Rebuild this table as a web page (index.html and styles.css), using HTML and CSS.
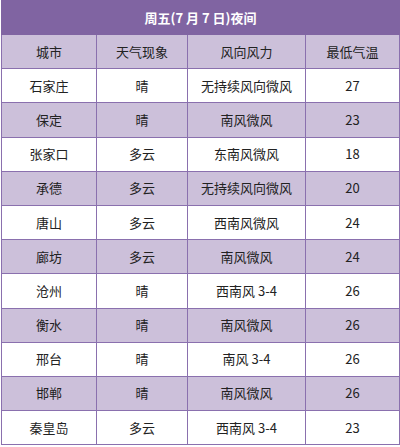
FILE: index.html
```html
<!DOCTYPE html>
<html lang="zh">
<head>
<meta charset="utf-8">
<link rel="stylesheet" href="styles.css">
</head>
<body>
<table class="weather">
  <colgroup>
    <col class="c1"><col class="c2"><col class="c3"><col class="c4">
  </colgroup>
  <thead>
    <tr class="title"><th colspan="4">周五(7 月 7 日)夜间</th></tr>
    <tr class="head"><th>城市</th><th>天气现象</th><th>风向风力</th><th>最低气温</th></tr>
  </thead>
  <tbody>
    <tr><td>石家庄</td><td>晴</td><td>无持续风向微风</td><td>27</td></tr>
    <tr class="alt"><td>保定</td><td>晴</td><td>南风微风</td><td>23</td></tr>
    <tr><td>张家口</td><td>多云</td><td>东南风微风</td><td>18</td></tr>
    <tr class="alt"><td>承德</td><td>多云</td><td>无持续风向微风</td><td>20</td></tr>
    <tr><td>唐山</td><td>多云</td><td>西南风微风</td><td>24</td></tr>
    <tr class="alt"><td>廊坊</td><td>多云</td><td>南风微风</td><td>24</td></tr>
    <tr><td>沧州</td><td>晴</td><td>西南风 3-4</td><td>26</td></tr>
    <tr class="alt"><td>衡水</td><td>晴</td><td>南风微风</td><td>26</td></tr>
    <tr><td>邢台</td><td>晴</td><td>南风 3-4</td><td>26</td></tr>
    <tr class="alt"><td>邯郸</td><td>晴</td><td>南风微风</td><td>26</td></tr>
    <tr><td>秦皇岛</td><td>多云</td><td>西南风 3-4</td><td>23</td></tr>
  </tbody>
</table>
</body>
</html>
```
FILE: styles.css
```css
html, body {
  margin: 0;
  padding: 0;
  background: #ffffff;
}
body {
  padding: 0 0 0 1px;
  font-family: "Noto Sans CJK SC", "Noto Sans", sans-serif;
  font-size: 13px;
  color: #222222;
}
.weather {
  border-collapse: collapse;
  table-layout: fixed;
  width: 398px;
}
.c1 { width: 95px; }
.c2 { width: 91px; }
.c3 { width: 118px; }
.c4 { width: 94px; }
.weather th,
.weather td {
  border: 1px solid #8a70ae;
  text-align: center;
  padding: 0;
  font-weight: normal;
  height: 33.2px;
  line-height: 16px;
}
.title th {
  background: #8064a2;
  color: #ffffff;
  font-weight: bold;
  border-color: #8064a2;
  height: 33px;
}
.head th {
  background: #ccc0da;
}
.alt td {
  background: #ccc0da;
}
```
